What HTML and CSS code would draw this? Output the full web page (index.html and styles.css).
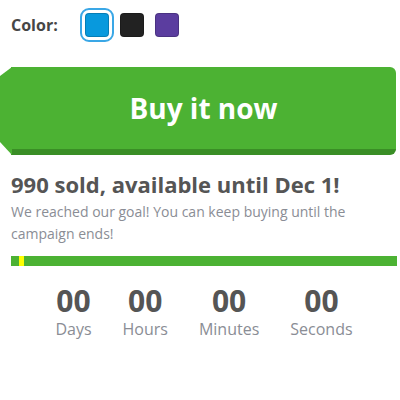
FILE: index.html
```html
<!DOCTYPE html>
<html>
<head>
<meta charset="utf-8">
<link rel="stylesheet" href="styles.css">
</head>
<body>
<div class="page">
  <div class="color-row">
    <span class="color-label">Color:</span>
    <div class="swatches">
      <span class="swatch swatch-blue selected"></span>
      <span class="swatch swatch-black"></span>
      <span class="swatch swatch-purple"></span>
    </div>
  </div>
  <button class="buy-btn">Buy it now</button>
  <h2 class="sold">990 sold, available until Dec 1!</h2>
  <p class="note">We reached our goal! You can keep buying until the campaign ends!</p>
  <div class="progress"><span class="marker"></span></div>
  <div class="countdown">
    <div class="unit"><div class="num">00</div><div class="lbl">Days</div></div>
    <div class="unit"><div class="num">00</div><div class="lbl">Hours</div></div>
    <div class="unit"><div class="num">00</div><div class="lbl">Minutes</div></div>
    <div class="unit"><div class="num">00</div><div class="lbl">Seconds</div></div>
  </div>
</div>
</body>
</html>
```

FILE: styles.css
```css
html, body {
  margin: 0;
  padding: 0;
  background: #fff;
}
body {
  font-family: "Open Sans", "Liberation Sans", sans-serif;
}
.page {
  padding: 8px 3px 0 11px;
}
.color-row {
  display: flex;
  align-items: center;
  height: 34px;
}
.color-label {
  flex: 0 0 74px;
  font-size: 16px;
  font-weight: 700;
  color: #464646;
}
.swatches {
  display: flex;
  gap: 11px;
}
.swatch {
  display: block;
  width: 24px;
  height: 24px;
  box-sizing: border-box;
  border-radius: 4px;
  border: 1px solid rgba(0, 0, 0, 0.18);
}
.swatch-blue { background: #0899dd; }
.swatch-black { background: #222222; }
.swatch-purple { background: #5b3d9f; }
.swatch.selected {
  outline: 2px solid #3aa7e6;
  outline-offset: 3px;
}
.buy-btn {
  position: relative;
  display: block;
  width: calc(100% - 1px);
  height: 88px;
  margin: 25px 0 0 0;
  padding: 0;
  border: 0;
  border-bottom: 6px solid #3a8e26;
  border-radius: 0 6px 6px 0;
  background: #4cb233;
  color: #fff;
  font-family: "Open Sans", "Liberation Sans", sans-serif;
  font-size: 28px;
  font-weight: 700;
  line-height: 82px;
  text-align: center;
  cursor: pointer;
}
.buy-btn::before {
  content: "";
  position: absolute;
  left: -11px;
  top: 0;
  bottom: -6px;
  width: 12px;
  background: #4cb233;
  clip-path: polygon(100% 0, 100% 100%, 0 calc(100% - 13px), 0 9px);
}
.sold {
  margin: 14px 0 0 0;
  font-size: 22px;
  line-height: 30px;
  font-weight: 700;
  color: #555555;
}
.note {
  margin: 2px 0 0 0;
  font-size: 14px;
  line-height: 22px;
  color: #8a8d95;
}
.progress {
  position: relative;
  height: 10px;
  margin-top: 11px;
  background: #4cb233;
}
.marker {
  position: absolute;
  left: 8px;
  top: 0;
  width: 5px;
  height: 10px;
  background: #ffff00;
}
.countdown {
  display: flex;
  justify-content: center;
  gap: 31px;
  margin-top: 18px;
}
.unit {
  text-align: center;
}
.num {
  font-size: 30px;
  line-height: 34px;
  font-weight: 700;
  color: #555555;
}
.lbl {
  font-size: 16px;
  line-height: 22px;
  color: #8a8d95;
}
```
